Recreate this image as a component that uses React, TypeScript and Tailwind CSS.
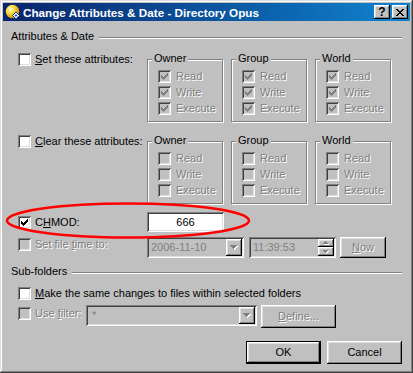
import React from "react";

const sunken =
  "shadow-[inset_1px_1px_0_#808080,inset_-1px_-1px_0_#ffffff,inset_2px_2px_0_#404040,inset_-2px_-2px_0_#dfdfdf]";
const raised =
  "shadow-[inset_-1px_-1px_0_#000000,inset_1px_1px_0_#ffffff,inset_-2px_-2px_0_#808080,inset_2px_2px_0_#dfdfdf]";
const dis = "text-[#808080] [text-shadow:1px_1px_0_#ffffff]";

const CHECK_PATH =
  "M3 5h1v3H3zM4 6h1v3H4zM5 7h1v3H5zM6 6h1v3H6zM7 5h1v3H7zM8 4h1v3H8zM9 3h1v3H9z";

function Box({ checked = false, disabled = false }: { checked?: boolean; disabled?: boolean }) {
  return (
    <span
      className={`relative block w-[13px] h-[13px] shrink-0 ${disabled ? "bg-[#c0c0c0]" : "bg-white"} ${sunken}`}
    >
      {checked && (
        <svg className="absolute left-0 top-0" width="13" height="13" viewBox="0 0 13 13" shapeRendering="crispEdges">
          <path d={CHECK_PATH} fill={disabled ? "#808080" : "#000000"} />
        </svg>
      )}
    </span>
  );
}

function DownArrow({ disabled = false }: { disabled?: boolean }) {
  const p = "M0 0h7v1H0zM1 1h5v1H1zM2 2h3v1H2zM3 3h1v1H3z";
  return (
    <svg width="8" height="5" viewBox="0 0 8 5" shapeRendering="crispEdges">
      {disabled && <path d={p} fill="#ffffff" transform="translate(1,1)" />}
      <path d={p} fill={disabled ? "#808080" : "#000000"} />
    </svg>
  );
}

function SmallArrow({ up }: { up: boolean }) {
  const p = up ? "M2 0h1v1H2zM1 1h3v1H1zM0 2h5v1H0z" : "M0 0h5v1H0zM1 1h3v1H1zM2 2h1v1H2z";
  return (
    <svg width="6" height="4" viewBox="0 0 6 4" shapeRendering="crispEdges">
      <path d={p} fill="#ffffff" transform="translate(1,1)" />
      <path d={p} fill="#808080" />
    </svg>
  );
}

function Group({ title, checked }: { title: string; checked: boolean }) {
  return (
    <div className="relative w-[76px] h-[63px] border border-[#808080] shadow-[inset_1px_1px_0_#ffffff,1px_1px_0_#ffffff] pl-[10px] pt-[10px]">
      <span className="absolute left-[4px] top-[-8px] bg-[#c0c0c0] px-[2px] leading-[13px] text-black">{title}</span>
      {["Read", "Write", "Execute"].map((l) => (
        <div key={l} className="flex items-start h-[16px] gap-[5px]">
          <Box checked={checked} disabled />
          <span className={`leading-[13px] whitespace-nowrap ${dis}`}>{l}</span>
        </div>
      ))}
    </div>
  );
}

function Header({ label, className }: { label: string; className: string }) {
  return (
    <div className={`flex h-[13px] ${className}`}>
      <span className="leading-[13px] whitespace-nowrap">{label}</span>
      <div className="flex-1 ml-[5px] mt-[7px] h-[2px] border-t border-t-[#808080] border-b border-b-white" />
    </div>
  );
}

function Button({
  children,
  className,
  def = false,
  disabled = false,
}: {
  children: React.ReactNode;
  className: string;
  def?: boolean;
  disabled?: boolean;
}) {
  return (
    <div className={`${className} ${def ? "border border-black" : ""} bg-[#c0c0c0] flex`}>
      <div className={`flex-1 flex items-center justify-center ${raised} ${disabled ? dis : "text-black"}`}>
        {children}
      </div>
    </div>
  );
}

function TitleBtn({ children }: { children: React.ReactNode }) {
  return (
    <div className={`w-[16px] h-[14px] bg-[#c0c0c0] ${raised} flex items-center justify-center`}>{children}</div>
  );
}

export default function App() {
  return (
    <div className="relative w-[413px] h-[373px] bg-[#c0c0c0] p-[3px] flex flex-col font-['Liberation_Sans',Arial,sans-serif] text-[11px] leading-[13px] text-black shadow-[inset_-1px_-1px_0_#404040,inset_1px_1px_0_#dfdfdf,inset_-2px_-2px_0_#808080,inset_2px_2px_0_#ffffff] overflow-hidden">
      {/* Title bar */}
      <div className="h-[18px] shrink-0 flex items-center bg-linear-to-r from-[#0a246a] to-[#1084d0] px-[2px]">
        <svg width="16" height="16" viewBox="0 0 16 16">
          <defs>
            <radialGradient id="ball" cx="0.35" cy="0.35" r="0.7">
              <stop offset="0" stopColor="#fffbd0" />
              <stop offset="0.45" stopColor="#f8d838" />
              <stop offset="1" stopColor="#c88800" />
            </radialGradient>
          </defs>
          <circle cx="7.5" cy="7.5" r="6.8" fill="url(#ball)" />
          <path d="M11 8 L14.5 11.5 L11 15 L7.5 11.5 Z" fill="#ffffff" stroke="#1a3a8a" strokeWidth="1" />
          <path d="M11 10 L12.5 11.5 L11 13 L9.5 11.5 Z" fill="#3050b0" />
        </svg>
        <span className="ml-[2px] text-white font-bold text-[11.7px] leading-[13px] whitespace-nowrap">
          Change Attributes &amp; Date - Directory Opus
        </span>
        <div className="ml-auto flex gap-[2px]">
          <TitleBtn>
            <span className="font-bold text-[12px] leading-[11px] text-black">?</span>
          </TitleBtn>
          <TitleBtn>
            <svg width="8" height="7" viewBox="0 0 8 7" shapeRendering="crispEdges">
              <path
                d="M0 0h2v1H0zM6 0h2v1H6zM1 1h2v1H1zM5 1h2v1H5zM2 2h4v1H2zM3 3h2v1H3zM2 4h4v1H2zM1 5h2v1H1zM5 5h2v1H5zM0 6h2v1H0zM6 6h2v1H6z"
                fill="#000000"
              />
            </svg>
          </TitleBtn>
        </div>
      </div>

      {/* Body */}
      <div className="flex flex-col pl-[8px] pr-[8px]">
        <Header label="Attributes & Date" className="mt-[9px]" />

        {/* Set these attributes */}
        <div className="flex mt-[10px]">
          <div className="w-[136px] pl-[7px] flex items-center gap-[4px] h-[13px]">
            <Box />
            <span className="whitespace-nowrap">
              <u>S</u>et these attributes:
            </span>
          </div>
          <div className="flex gap-[8px] mt-[6px]">
            <Group title="Owner" checked />
            <Group title="Group" checked />
            <Group title="World" checked />
          </div>
        </div>

        {/* Clear these attributes */}
        <div className="flex mt-[13px]">
          <div className="w-[136px] pl-[7px] flex items-center gap-[4px] h-[13px]">
            <Box />
            <span className="whitespace-nowrap">
              <u>C</u>lear these attributes:
            </span>
          </div>
          <div className="flex gap-[8px] mt-[6px]">
            <Group title="Owner" checked={false} />
            <Group title="Group" checked={false} />
            <Group title="World" checked={false} />
          </div>
        </div>

        {/* CHMOD */}
        <div className="flex mt-[8px] h-[20px]">
          <div className="w-[136px] pl-[7px] flex items-center gap-[4px]">
            <Box checked />
            <span className="whitespace-nowrap">
              C<u>H</u>MOD:
            </span>
          </div>
          <div className={`w-[77px] h-[20px] bg-white ${sunken} flex items-center justify-center`}>666</div>
        </div>

        {/* Set file time */}
        <div className="flex mt-[5px] h-[21px]">
          <div className="w-[136px] pl-[7px] flex items-start pt-[1px] gap-[4px]">
            <Box disabled />
            <span className={`whitespace-nowrap ${dis}`}>
              Set file <u>t</u>ime to:
            </span>
          </div>
          <div className={`w-[97px] h-[21px] bg-[#c0c0c0] ${sunken} flex p-[2px]`}>
            <span className="flex-1 pl-[2px] flex items-center text-[#808080]">2006-11-10</span>
            <span className={`w-[16px] h-[17px] ${raised} flex items-center justify-center`}>
              <DownArrow disabled />
            </span>
          </div>
          <div className={`ml-[5px] w-[87px] h-[21px] bg-[#c0c0c0] ${sunken} flex p-[2px]`}>
            <span className="flex-1 pl-[2px] flex items-center text-[#808080]">11:39:53</span>
            <div className="w-[16px] flex flex-col">
              <span className={`h-[8px] ${raised} flex items-center justify-center`}>
                <SmallArrow up />
              </span>
              <span className={`h-[9px] ${raised} flex items-center justify-center`}>
                <SmallArrow up={false} />
              </span>
            </div>
          </div>
          <Button className="ml-[4px] w-[46px] h-[21px]" disabled>
            <span>
              <u>N</u>ow
            </span>
          </Button>
        </div>

        <Header label="Sub-folders" className="mt-[7px]" />

        {/* Make same changes */}
        <div className="flex mt-[9px] h-[13px] pl-[7px] items-center gap-[4px]">
          <Box />
          <span className="whitespace-nowrap">
            <u>M</u>ake the same changes to files within selected folders
          </span>
        </div>

        {/* Use filter */}
        <div className="flex mt-[5px] h-[23px] items-start">
          <div className="w-[75px] pl-[7px] flex items-start pt-[2px] gap-[4px]">
            <Box disabled />
            <span className={`whitespace-nowrap ${dis}`}>
              Use <u>f</u>ilter:
            </span>
          </div>
          <div className={`w-[171px] h-[21px] bg-[#c0c0c0] ${sunken} flex p-[2px]`}>
            <span className="flex-1 pl-[4px] flex items-center text-[#808080]">*</span>
            <span className={`w-[16px] h-[17px] ${raised} flex items-center justify-center`}>
              <DownArrow disabled />
            </span>
          </div>
          <Button className="ml-[4px] w-[75px] h-[23px]" disabled>
            <span>
              <u>D</u>efine...
            </span>
          </Button>
        </div>

        {/* OK / Cancel */}
        <div className="flex justify-end gap-[6px] mt-[13px]">
          <Button className="w-[75px] h-[23px]" def>
            OK
          </Button>
          <Button className="w-[75px] h-[23px]">Cancel</Button>
        </div>
      </div>

      {/* Red annotation ellipse */}
      <svg className="absolute left-0 top-0 pointer-events-none" width="413" height="373" viewBox="0 0 413 373">
        <ellipse cx="128" cy="220.5" rx="121" ry="17" fill="none" stroke="#ff0000" strokeWidth="2.5" />
      </svg>
    </div>
  );
}
